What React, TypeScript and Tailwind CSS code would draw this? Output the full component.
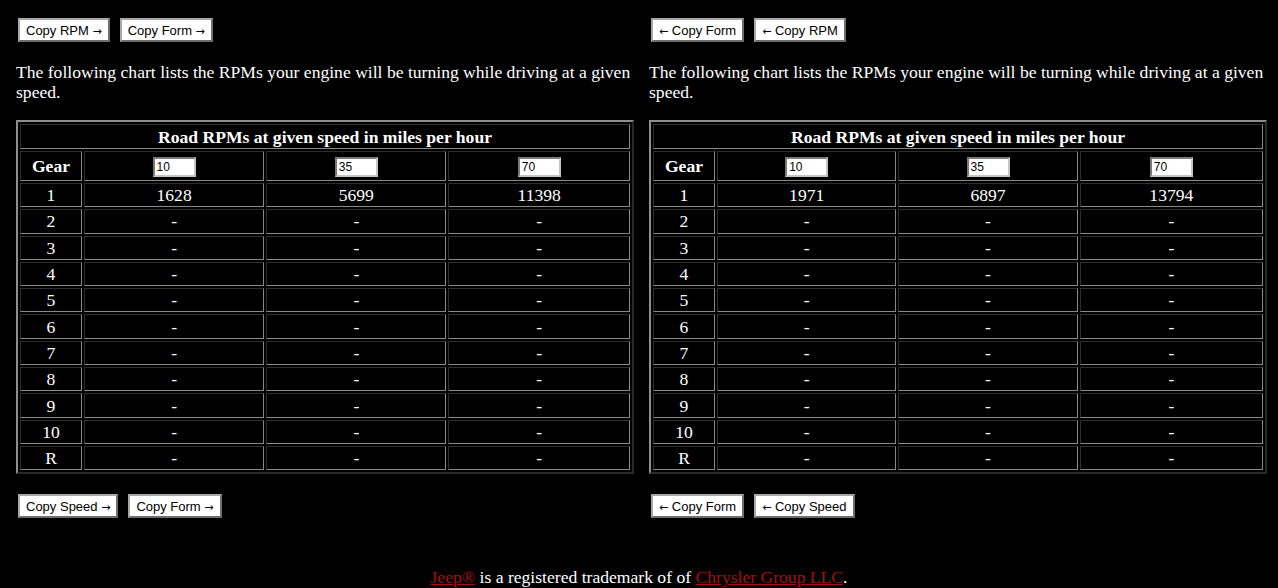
import React from 'react'

const serif = { fontFamily: '"Liberation Serif", "Times New Roman", serif' }

type Panel = {
  top: string[]
  bottom: string[]
  first: string[]
}

const panels: Panel[] = [
  {
    top: ['Copy RPM →', 'Copy Form →'],
    bottom: ['Copy Speed →', 'Copy Form →'],
    first: ['1628', '5699', '11398'],
  },
  {
    top: ['← Copy Form', '← Copy RPM'],
    bottom: ['← Copy Form', '← Copy Speed'],
    first: ['1971', '6897', '13794'],
  },
]

const gears = ['2', '3', '4', '5', '6', '7', '8', '9', '10', 'R']
const speeds = ['10', '35', '70']

function Btn({ label }: { label: string }) {
  // split the arrow out so it can use a font with a proper arrow glyph
  const parts = label.split(/([←→])/)
  return (
    <button className="h-[24px] px-[6px] bg-white text-black text-[13px] leading-none border-2 border-t-[#a8a8a8] border-l-[#a8a8a8] border-r-[#6e6e6e] border-b-[#6e6e6e] font-['Liberation_Sans',Arial,sans-serif]">
      {parts.map((s, i) =>
        s === '←' || s === '→' ? (
          <span key={i} className="font-['DejaVu_Sans',sans-serif] text-[11px]">
            {s}
          </span>
        ) : (
          s
        ),
      )}
    </button>
  )
}

// inset cell border: dark top/left, light bottom/right
const cell =
  'border border-t-[#2e2e2e] border-l-[#2e2e2e] border-r-[#8a8a8a] border-b-[#8a8a8a] text-center align-middle p-0 leading-[20px]'

function RpmTable({ first }: { first: string[] }) {
  return (
    <table
      className="w-[618px] border-separate border-spacing-[2px] border-2 border-t-[#8e8e8e] border-l-[#8e8e8e] border-r-[#2a2a2a] border-b-[#2a2a2a] text-white text-[17.6px]"
      style={serif}
    >
      <tbody>
        <tr>
          <th colSpan={4} className={`${cell} h-[25px] font-bold`}>
            Road RPMs at given speed in miles per hour
          </th>
        </tr>
        <tr>
          <th className={`${cell} w-[62px] h-[30px] font-bold`}>Gear</th>
          {speeds.map((s) => (
            <td key={s} className={cell}>
              <input
                readOnly
                value={s}
                className="w-[43px] h-[20px] bg-white text-black text-[12px] px-[2px] align-middle border-2 border-t-[#7a7a7a] border-l-[#7a7a7a] border-r-[#c4c4c4] border-b-[#c4c4c4] font-['Liberation_Sans',Arial,sans-serif] outline-none"
              />
            </td>
          ))}
        </tr>
        <tr>
          <td className={`${cell} h-[24.3px]`}>1</td>
          {first.map((v, i) => (
            <td key={i} className={cell}>
              {v}
            </td>
          ))}
        </tr>
        {gears.map((g) => (
          <tr key={g}>
            <td className={`${cell} h-[24.3px]`}>{g}</td>
            <td className={cell}>-</td>
            <td className={cell}>-</td>
            <td className={cell}>-</td>
          </tr>
        ))}
      </tbody>
    </table>
  )
}

export default function App() {
  return (
    <div className="min-h-[588px] bg-black text-white" style={serif}>
      <div className="flex gap-[15px] pl-[16px]">
        {panels.map((p, i) => (
          <div key={i} className="w-[618px] shrink-0">
            <div className="flex gap-[10px] pl-[2px] pt-[18px]">
              {p.top.map((t) => (
                <Btn key={t} label={t} />
              ))}
            </div>
            <p className="mt-[20px] text-[17.6px] leading-[20px]">
              The following chart lists the RPMs your engine will be turning while driving at a given speed.
            </p>
            <div className="mt-[18px]">
              <RpmTable first={p.first} />
            </div>
            <div className="flex gap-[10px] pl-[2px] mt-[20px]">
              {p.bottom.map((t) => (
                <Btn key={t} label={t} />
              ))}
            </div>
          </div>
        ))}
      </div>
      <p className="mt-[49px] text-center text-[17.6px] leading-[20px]">
        <a href="#" className="text-[#a50f0f] underline">
          Jeep®
        </a>{' '}
        is a registered trademark of of{' '}
        <a href="#" className="text-[#a50f0f] underline">
          Chrysler Group LLC
        </a>
        .
      </p>
    </div>
  )
}
